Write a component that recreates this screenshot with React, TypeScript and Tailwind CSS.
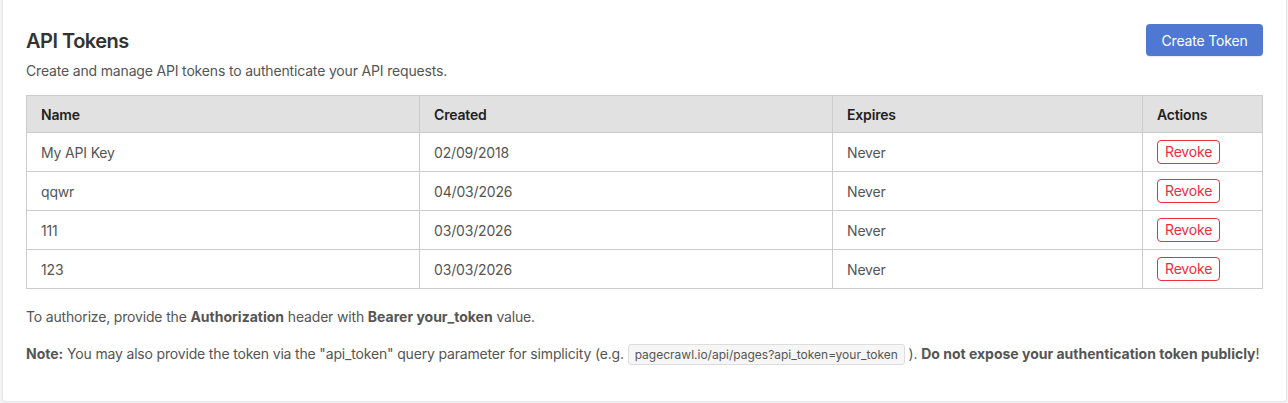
const tokens = [
  { name: 'My API Key', created: '02/09/2018', expires: 'Never' },
  { name: 'qqwr', created: '04/03/2026', expires: 'Never' },
  { name: '111', created: '03/03/2026', expires: 'Never' },
  { name: '123', created: '03/03/2026', expires: 'Never' },
];

export default function App() {
  return (
    <div className="min-h-[403px] bg-[#f3f3f5] pb-[2px] font-['Inter','Liberation_Sans',sans-serif] text-[14px] tracking-[-0.17px] text-[#555]">
      <div className="ml-[2px] mr-[1px] rounded-b-[4px] border border-t-0 border-[#e6e6e8] bg-white px-[23px] pt-[24px] pb-[36px]">
        <div className="flex items-start justify-between">
          <div>
            <h2 className="mt-[5px] text-[20px] font-semibold leading-[24px] tracking-[-0.5px] text-[#333]">API Tokens</h2>
            <p className="mt-[8px] leading-[20px]">Create and manage API tokens to authenticate your API requests.</p>
          </div>
          <button
            type="button"
            className="h-[32px] w-[117px] rounded-[4px] bg-[#4f78d3] text-[14px] text-white shadow-[0_1px_1px_rgba(0,0,0,0.08)]"
          >
            Create Token
          </button>
        </div>

        <table className="mt-[14px] w-full table-fixed border-collapse border border-[#cccccc]">
          <colgroup>
            <col className="w-[393px]" />
            <col className="w-[413px]" />
            <col className="w-[310px]" />
            <col />
          </colgroup>
          <thead>
            <tr className="h-[37px] bg-[#e1e1e1] text-left">
              <th className="border border-[#cccccc] px-[14px] font-semibold text-[#222]">Name</th>
              <th className="border border-[#cccccc] px-[14px] font-semibold text-[#222]">Created</th>
              <th className="border border-[#cccccc] px-[14px] font-semibold text-[#222]">Expires</th>
              <th className="border border-[#cccccc] px-[14px] font-semibold text-[#222]">Actions</th>
            </tr>
          </thead>
          <tbody>
            {tokens.map((t) => (
              <tr key={t.name} className="h-[39px]">
                <td className="border border-[#cccccc] px-[14px]">{t.name}</td>
                <td className="border border-[#cccccc] px-[14px]">{t.created}</td>
                <td className="border border-[#cccccc] px-[14px]">{t.expires}</td>
                <td className="border border-[#cccccc] px-[14px]">
                  <button
                    type="button"
                    className="h-[24px] rounded-[4px] border border-[#ee2d3a] px-[7px] text-[14px] leading-[22px] text-[#ee2d3a]"
                  >
                    Revoke
                  </button>
                </td>
              </tr>
            ))}
          </tbody>
        </table>

        <p className="mt-[18px] leading-[20px]">
          To authorize, provide the <b className="font-bold tracking-normal">Authorization</b> header with{' '}
          <b className="font-bold tracking-normal">Bearer your_token</b> value.
        </p>
        <p className="mt-[17px] whitespace-nowrap leading-[20px]">
          <b className="font-bold tracking-normal">Note:</b> You may also provide the token via the "api_token" query
          parameter for simplicity (e.g.{' '}
          <code className="rounded-[3px] border border-[#dddddd] bg-[#f6f6f6] px-[6px] py-[2px] font-['Inter','Liberation_Sans',sans-serif] text-[12px] tracking-normal text-[#555]">
            pagecrawl.io/api/pages?api_token=your_token
          </code>{' '}
          ). <b className="font-bold tracking-normal">Do not expose your authentication token publicly</b>!
        </p>
      </div>
    </div>
  );
}
